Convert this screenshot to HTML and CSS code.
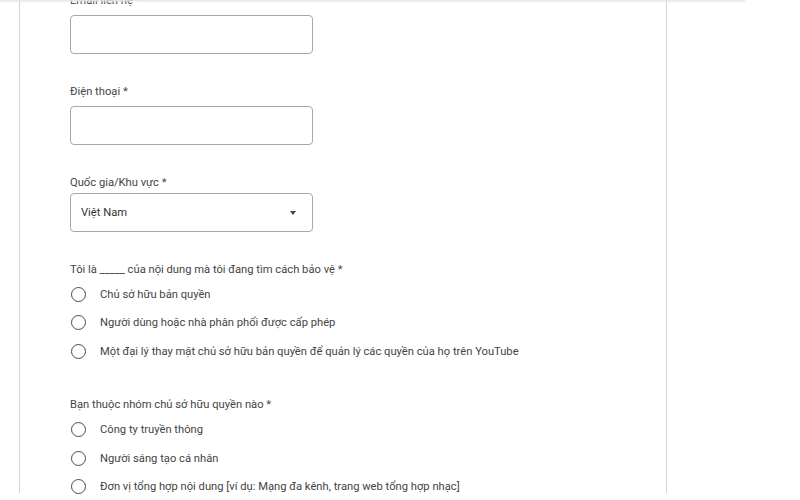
FILE: index.html
```html
<!DOCTYPE html>
<html lang="vi">
<head>
    <meta charset="UTF-8">
    <meta name="viewport" content="width=device-width, initial-scale=1.0">
    <title>Khiếu nại bản quyền</title>
    <link rel="stylesheet" href="styles.css">
</head>
<body>
    <div class="top-shadow"></div>
    <div class="form-card">
        <div class="field field-first">
            <label class="field-label" for="email">Email liên hệ *</label>
            <input class="text-input" type="email" id="email">
        </div>
        <div class="field">
            <label class="field-label" for="phone">Điện thoại *</label>
            <input class="text-input" type="tel" id="phone">
        </div>
        <div class="field field-select">
            <label class="field-label">Quốc gia/Khu vực *</label>
            <div class="select-box">
                <span>Việt Nam</span>
                <span class="select-arrow"></span>
            </div>
        </div>

        <div class="question">
            <div class="field-label">Tôi là _____ của nội dung mà tôi đang tìm cách bảo vệ *</div>
            <label class="radio-row"><span class="radio"></span>Chủ sở hữu bản quyền</label>
            <label class="radio-row"><span class="radio"></span>Người dùng hoặc nhà phân phối được cấp phép</label>
            <label class="radio-row"><span class="radio"></span>Một đại lý thay mặt chủ sở hữu bản quyền để quản lý các quyền của họ trên YouTube</label>
        </div>

        <div class="question question-last">
            <div class="field-label">Bạn thuộc nhóm chủ sở hữu quyền nào *</div>
            <label class="radio-row"><span class="radio"></span>Công ty truyền thông</label>
            <label class="radio-row"><span class="radio"></span>Người sáng tạo cá nhân</label>
            <label class="radio-row"><span class="radio"></span>Đơn vị tổng hợp nội dung [ví dụ: Mạng đa kênh, trang web tổng hợp nhạc]</label>
        </div>
    </div>
</body>
</html>
```

FILE: styles.css
```css
* {
    box-sizing: border-box;
    margin: 0;
    padding: 0;
}

body {
    font-family: Roboto, Arial, sans-serif;
    font-size: 11.2px;
    color: #444;
    background-color: white;
    height: 500px;
    overflow: hidden;
}

.top-shadow {
    position: absolute;
    top: 0;
    left: 0;
    width: 745px;
    height: 3px;
    background: linear-gradient(#e4e4e4, rgba(255, 255, 255, 0));
}

.form-card {
    margin-left: 19px;
    width: 648px;
    height: 500px;
    border-left: 1px solid #d4d4d4;
    border-right: 1px solid #d4d4d4;
    padding-left: 50px;
}

.field {
    margin-bottom: 30px;
}

.field-first {
    margin-top: -7px;
}

.field-label {
    display: block;
    line-height: 16px;
    margin-bottom: 6px;
}

.field-select .field-label {
    margin-bottom: 2px;
}

.text-input,
.select-box {
    display: block;
    width: 243px;
    height: 39px;
    border: 1px solid #a8a8a8;
    border-radius: 4px;
    background-color: white;
    font-family: inherit;
}

.select-box {
    display: flex;
    align-items: center;
    justify-content: space-between;
    padding: 0 16px 0 10px;
    color: #333;
}

.select-arrow {
    width: 0;
    height: 0;
    border-left: 3px solid transparent;
    border-right: 3px solid transparent;
    border-top: 4px solid #444;
}

.question {
    margin-bottom: 31px;
}

.question .field-label {
    margin-bottom: 2px;
}

.question-last .field-label {
    margin-bottom: 3px;
}

.radio-row {
    display: flex;
    align-items: center;
    height: 28.5px;
    gap: 14px;
}

.radio {
    width: 15px;
    height: 15px;
    margin-left: 1px;
    border: 1.6px solid #4a4a4a;
    border-radius: 50%;
    flex-shrink: 0;
}
```
